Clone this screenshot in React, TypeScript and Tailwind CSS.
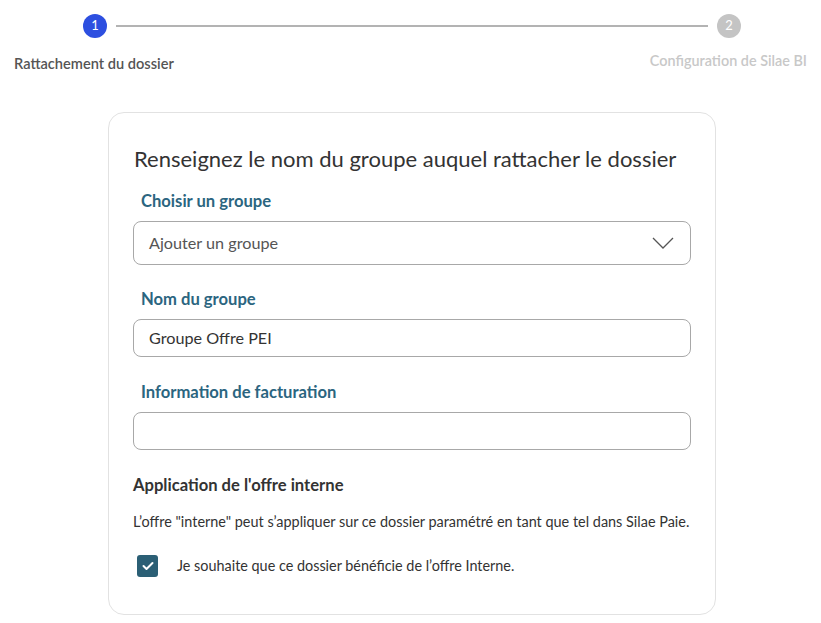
import React from "react";

export default function App() {
  return (
    <div className="min-h-[623px] w-[821px] bg-white text-[#333]" style={{ fontFamily: "Lato, 'Noto Sans', sans-serif" }}>
      {/* Stepper */}
      <div className="flex items-center pl-[83px] pr-[80px] pt-[14px]">
        <div className="flex h-[24px] w-[24px] items-center justify-center rounded-full bg-[#2d4fe0] text-[13px] text-white">1</div>
        <div className="mx-[9px] h-[2px] flex-1 bg-[#b3b3b3]" />
        <div className="flex h-[24px] w-[24px] items-center justify-center rounded-full bg-[#c4c4c4] text-[13px] text-white">2</div>
      </div>
      <div className="flex items-start justify-between px-[14px] pt-[13px]">
        <div className="pt-[3px] text-[14.6px] font-semibold leading-[20px] text-[#555]">Rattachement du dossier</div>
        <div className="text-[14.4px] font-semibold leading-[20px] text-[#c8c8c8]">Configuration de Silae BI</div>
      </div>

      {/* Card */}
      <div className="ml-[108px] mt-[38px] w-[608px] rounded-[16px] border border-[#e2e2e2] px-[24px] pb-[37px] pt-[32px]">
        <h1 className="pl-[1px] text-[22px] leading-[28px] text-[#333]">Renseignez le nom du groupe auquel rattacher le dossier</h1>

        <div className="mt-[18px] pl-[8px] text-[16.6px] font-bold leading-[20px] text-[#2b6580]">Choisir un groupe</div>
        <div className="mt-[10px] flex h-[44px] items-center justify-between rounded-[8px] border border-[#a8a8a8] pl-[15px] pr-[16px]">
          <span className="text-[16.2px] text-[#555]">Ajouter un groupe</span>
          <svg width="22" height="12" viewBox="0 0 22 12" fill="none">
            <path d="M1 1 L11 11 L21 1" stroke="#555" strokeWidth="1.3" />
          </svg>
        </div>

        <div className="mt-[24px] pl-[8px] text-[16.6px] font-bold leading-[20px] text-[#2b6580]">Nom du groupe</div>
        <div className="mt-[10px] flex h-[38px] items-center rounded-[8px] border border-[#a8a8a8] pl-[15px]">
          <span className="text-[16.2px] text-[#333]">Groupe Offre PEI</span>
        </div>

        <div className="mt-[25px] pl-[8px] text-[16.6px] font-bold leading-[20px] text-[#2b6580]">Information de facturation</div>
        <div className="mt-[10px] h-[38px] rounded-[8px] border border-[#a8a8a8]" />

        <div className="mt-[25px] text-[16.6px] font-bold leading-[20px] text-[#333]">Application de l'offre interne</div>
        <p className="mt-[18px] whitespace-nowrap text-[14.45px] leading-[18px] text-[#333]">L’offre "interne" peut s’appliquer sur ce dossier paramétré en tant que tel dans Silae Paie.</p>

        <div className="mt-[24px] flex items-center pl-[4px]">
          <div className="flex h-[22px] w-[21px] items-center justify-center rounded-[3px] bg-[#2b5f75]">
            <svg width="12" height="10" viewBox="0 0 12 10" fill="none">
              <path d="M1.5 5 L4.5 8 L10.5 2" stroke="white" strokeWidth="2" strokeLinecap="round" strokeLinejoin="round" />
            </svg>
          </div>
          <span className="ml-[19px] text-[14.4px] text-[#333]">Je souhaite que ce dossier bénéficie de l’offre Interne.</span>
        </div>
      </div>
    </div>
  );
}
